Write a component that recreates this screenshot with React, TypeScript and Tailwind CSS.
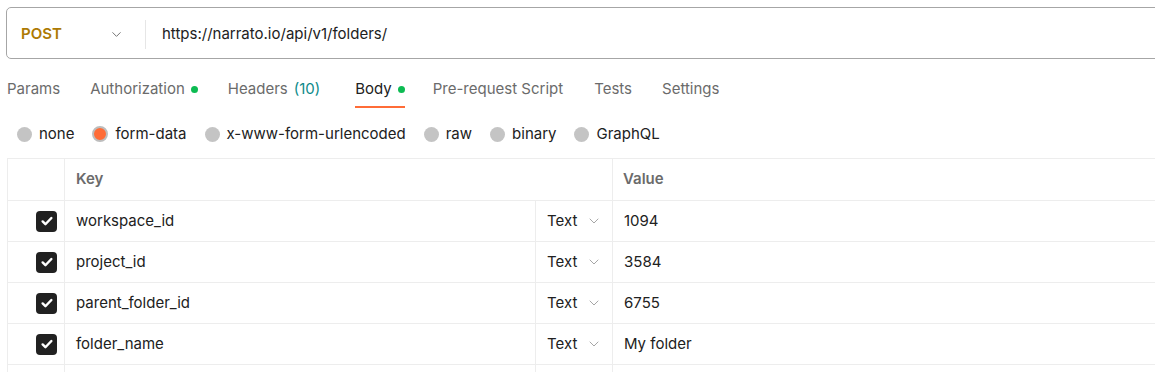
import { ChevronDown } from "lucide-react";

const rows = [
  { key: "workspace_id", value: "1094" },
  { key: "project_id", value: "3584" },
  { key: "parent_folder_id", value: "6755" },
  { key: "folder_name", value: "My folder" },
];

const tabs = [
  { label: "Params", gap: "mr-[30px]" },
  { label: "Authorization", dot: true, gap: "mr-[30px]" },
  { label: "Headers", count: "(10)", gap: "mr-[35px]" },
  { label: "Body", dot: true, active: true, gap: "mr-[28px]" },
  { label: "Pre-request Script", gap: "mr-[31px]" },
  { label: "Tests", gap: "mr-[30px]" },
  { label: "Settings", gap: "mr-[30px]" },
];

const bodyTypes = ["none", "form-data", "x-www-form-urlencoded", "raw", "binary", "GraphQL"];

function Check() {
  return (
    <div className="w-[21px] h-[21px] rounded-[4px] bg-[#212121] flex items-center justify-center">
      <svg width="14" height="14" viewBox="0 0 16 16" fill="none">
        <path d="M3 8.5l3.2 3.2L13 4.6" stroke="white" strokeWidth="2.8" strokeLinecap="round" strokeLinejoin="round" />
      </svg>
    </div>
  );
}

export default function App() {
  return (
    <div className="w-[1155px] h-[372px] overflow-hidden bg-white font-['Inter',sans-serif] text-[15px] text-[#212121]">
      {/* URL bar */}
      <div className="pt-[7px] pl-[6px]">
        <div className="w-[1160px] h-[52px] pt-[2px] flex items-center border border-[#a6a6a6] rounded-[5px]">
          <div className="flex items-center w-[138px] pl-[14px]">
            <span className="font-semibold text-[#ad7a03] w-[88px]">POST</span>
            <ChevronDown className="w-[15px] h-[15px] text-[#6b6b6b]" strokeWidth={1.5} />
          </div>
          <div className="w-px h-[29px] bg-[#e6e6e6]" />
          <span className="pl-[16px]">https://narrato.io/api/v1/folders/</span>
        </div>
      </div>

      {/* Tabs */}
      <div className="flex pl-[7px] mt-[11px] h-[38px]">
        {tabs.map((t) => (
          <div
            key={t.label}
            className={
              "flex items-center h-full relative " + t.gap + " " + (t.active ? "text-[#212121]" : "text-[#6b6b6b]")
            }
          >
            <span>{t.label}</span>
            {t.count && <span className="ml-[6px] text-[#0e8a8a]">{t.count}</span>}
            {t.dot && <span className="ml-[6px] w-[7px] h-[7px] rounded-full bg-[#0cbb52]" />}
            {t.active && <div className="absolute left-0 right-0 bottom-0 h-[2px] bg-[#ff6c37]" />}
          </div>
        ))}
      </div>

      {/* Body types */}
      <div className="flex items-center pl-[17px] h-[42px] mt-[5px]">
        {bodyTypes.map((b) => (
          <div key={b} className="flex items-center mr-[18px]">
            {b === "form-data" ? (
              <span className="w-[16px] h-[16px] rounded-full border-[2px] border-[#bdbdbd] bg-[#ff6c37] box-border" />
            ) : (
              <span className="w-[15px] h-[15px] rounded-full bg-[#c4c4c4]" />
            )}
            <span className="ml-[7px]">{b}</span>
          </div>
        ))}
      </div>

      {/* Table */}
      <div className="ml-[7px] mt-[3px] w-[1160px] border-l border-t border-[#ededed]">
        <div className="grid grid-cols-[57px_548px_1fr] h-[42px] border-b border-[#ededed] font-semibold text-[#6b6b6b]">
          <div className="border-r border-[#ededed]" />
          <div className="flex items-center pl-[11px] border-r border-[#ededed]">Key</div>
          <div className="flex items-center pl-[10px]">Value</div>
        </div>
        {rows.map((r) => (
          <div key={r.key} className="grid grid-cols-[57px_471px_77px_1fr] h-[41px] border-b border-[#ededed]">
            <div className="flex items-center justify-end pr-[7px] border-r border-[#ededed]">
              <Check />
            </div>
            <div className="flex items-center pl-[11px] border-r border-[#ededed]">{r.key}</div>
            <div className="flex items-center pl-[11px] border-r border-[#ededed]">
              <span>Text</span>
              <ChevronDown className="ml-[9px] w-4 h-4 text-[#a6a6a6]" strokeWidth={1.5} />
            </div>
            <div className="flex items-center pl-[11px]">{r.value}</div>
          </div>
        ))}
        <div className="grid grid-cols-[57px_471px_77px_1fr] h-[41px]">
          <div className="border-r border-[#ededed]" />
          <div className="border-r border-[#ededed]" />
          <div className="border-r border-[#ededed]" />
          <div />
        </div>
      </div>
    </div>
  );
}
